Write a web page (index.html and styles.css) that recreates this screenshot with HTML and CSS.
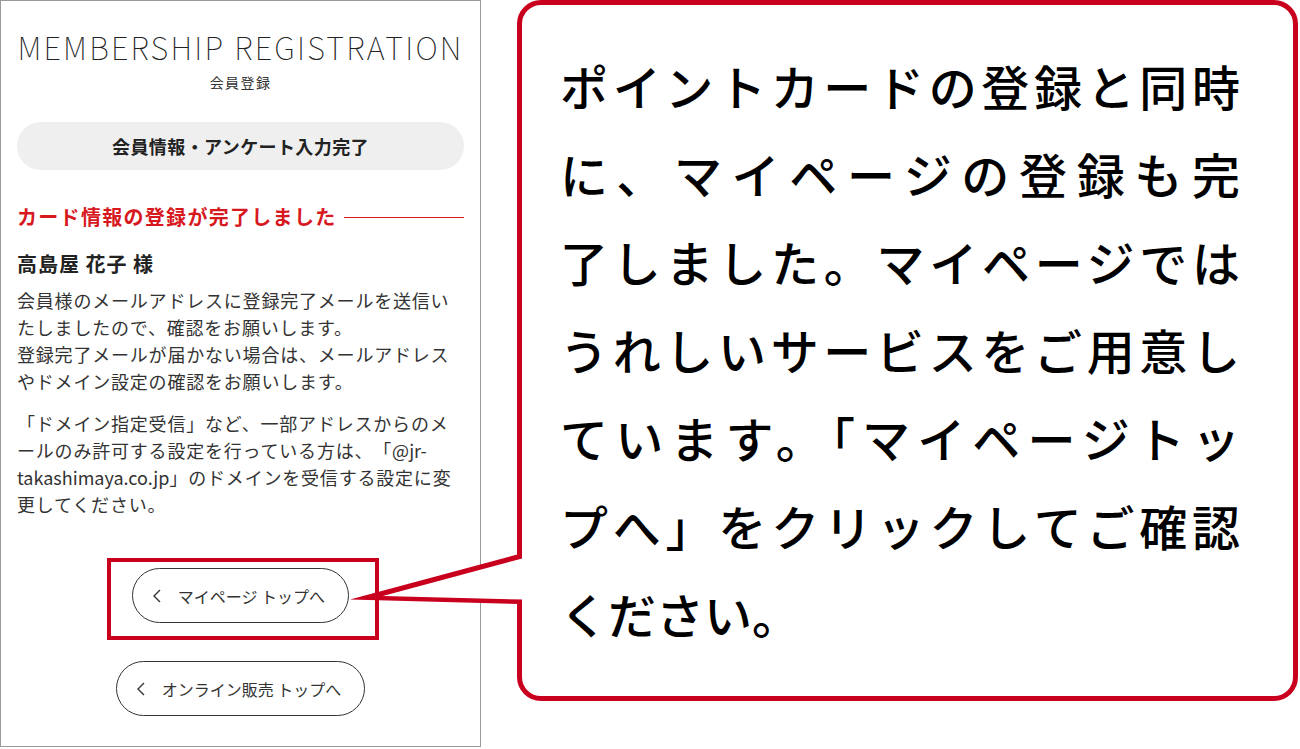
FILE: index.html
```html
<!DOCTYPE html>
<html lang="ja">

<head>
    <meta charset="utf-8">
    <meta name="viewport" content="width=device-width, initial-scale=1.0">
    <title>会員登録</title>
    <link rel="stylesheet" href="styles.css">
</head>

<body>
    <div class="page">
        <section class="phone">
            <h1 class="title">MEMBERSHIP REGISTRATION</h1>
            <p class="subtitle">会員登録</p>
            <div class="step">会員情報・アンケート入力完了</div>

            <h2 class="done">カード情報の登録が完了しました</h2>
            <p class="name">高島屋 花子 様</p>
            <p class="text">会員様のメールアドレスに登録完了メールを送信いたしましたので、確認をお願いします。<br>登録完了メールが届かない場合は、メールアドレスやドメイン設定の確認をお願いします。</p>
            <p class="text">「ドメイン指定受信」など、一部アドレスからのメールのみ許可する設定を行っている方は、「<span class="mail">@jr-</span><span class="mail">takashimaya.co.jp</span>」のドメインを受信する設定に変更してください。</p>

            <nav class="links">
                <a class="btn" href="#">
                    <svg class="chev" viewBox="0 0 8 14"><polyline points="7,1 1,7 7,13" /></svg>
                    マイページ トップへ
                </a>
                <a class="btn" href="#">
                    <svg class="chev" viewBox="0 0 8 14"><polyline points="7,1 1,7 7,13" /></svg>
                    オンライン販売 トップへ
                </a>
            </nav>
        </section>

        <div class="callout">
            <p>ポイントカードの登録と同時</p>
            <p>に、マイページの登録も完</p>
            <p>了しました。マイページでは</p>
            <p>うれしいサービスをご用意し</p>
            <p>ています。「マイページトッ</p>
            <p>プへ」をクリックしてご確認</p>
            <p class="last">ください。</p>
        </div>

        <!-- annotation: box round the button + tail of the callout -->
        <svg class="marks" viewBox="0 0 1300 749">
            <rect class="hl" x="109" y="560" width="268" height="78" />
            <polygon class="tail" points="350,599.5 519,554 519,604" />
            <polygon class="tail-in" points="382.8,595.9 524,557.9 524,599.6" />
        </svg>
    </div>
</body>

</html>
```

FILE: styles.css
```css
body {
    margin: 0;
    background: #fff;
    color: #222;
    font-family: "Noto Sans CJK JP", "Noto Sans", sans-serif;
}

.page {
    position: relative;
    display: flex;
    align-items: flex-start;
    width: 1300px;
    height: 749px;
}

/* left: phone screen */

.phone {
    box-sizing: border-box;
    width: 481px;
    height: 747px;
    border: 1px solid #999;
    padding: 0 16px;
}

.title {
    margin: 30px -10px 0;
    font-size: 31px;
    font-weight: 100;
    line-height: 1;
    letter-spacing: 2.2px;
    text-align: center;
    white-space: nowrap;
    color: #222;
}

.subtitle {
    margin: 10px 0 0;
    font-size: 14px;
    line-height: 21px;
    letter-spacing: 1.4px;
    text-align: center;
    color: #333;
}

.step {
    margin-top: 29px;
    height: 48px;
    border-radius: 24px;
    background: #efefef;
    font-size: 18px;
    font-weight: bold;
    line-height: 48px;
    letter-spacing: 0.4px;
    text-align: center;
}

.done {
    display: flex;
    align-items: center;
    margin: 33px 0 0;
    font-size: 20px;
    line-height: 28px;
    letter-spacing: 1.3px;
    color: #d7191f;
}

.done::after {
    content: "";
    flex: 1;
    height: 1px;
    margin-left: 7px;
    background: #d7191f;
}

.name {
    margin: 19px 0 0;
    font-size: 20px;
    font-weight: bold;
    line-height: 28px;
    letter-spacing: 1px;
}

.text {
    margin: 9px 0 0;
    font-size: 18px;
    line-height: 27px;
    letter-spacing: 0.8px;
    color: #333;
    text-spacing-trim: space-all;
}

.text + .text {
    margin-top: 15px;
}

.mail {
    letter-spacing: 0;
}

.links {
    display: flex;
    flex-direction: column;
    align-items: center;
    gap: 38px;
    margin-top: 50px;
}

.btn {
    display: inline-flex;
    align-items: center;
    box-sizing: border-box;
    height: 55px;
    padding: 0 23px 0 20px;
    border: 1px solid #333;
    border-radius: 28px;
    font-size: 16px;
    color: #333;
    text-decoration: none;
    white-space: nowrap;
}

.chev {
    width: 8px;
    height: 14px;
    margin-right: 17px;
}

.chev polyline {
    fill: none;
    stroke: #333;
    stroke-width: 1.4;
}

/* right: callout */

.callout {
    box-sizing: border-box;
    width: 781px;
    height: 701px;
    margin-left: 36px;
    padding: 36px 0 0 38px;
    border: 5px solid #c8001e;
    border-radius: 24px;
}

.callout p {
    width: 680px;
    margin: 0;
    font-size: 48px;
    font-weight: 500;
    line-height: 88px;
    color: #000;
    text-align: justify;
    text-align-last: justify;
}

.callout p.last {
    text-align-last: left;
}

.marks {
    position: absolute;
    top: 0;
    left: 0;
    width: 1300px;
    height: 749px;
    pointer-events: none;
}

.hl {
    fill: none;
    stroke: #c8001e;
    stroke-width: 4;
}

.tail {
    fill: #c8001e;
}

.tail-in {
    fill: #fff;
}
```
